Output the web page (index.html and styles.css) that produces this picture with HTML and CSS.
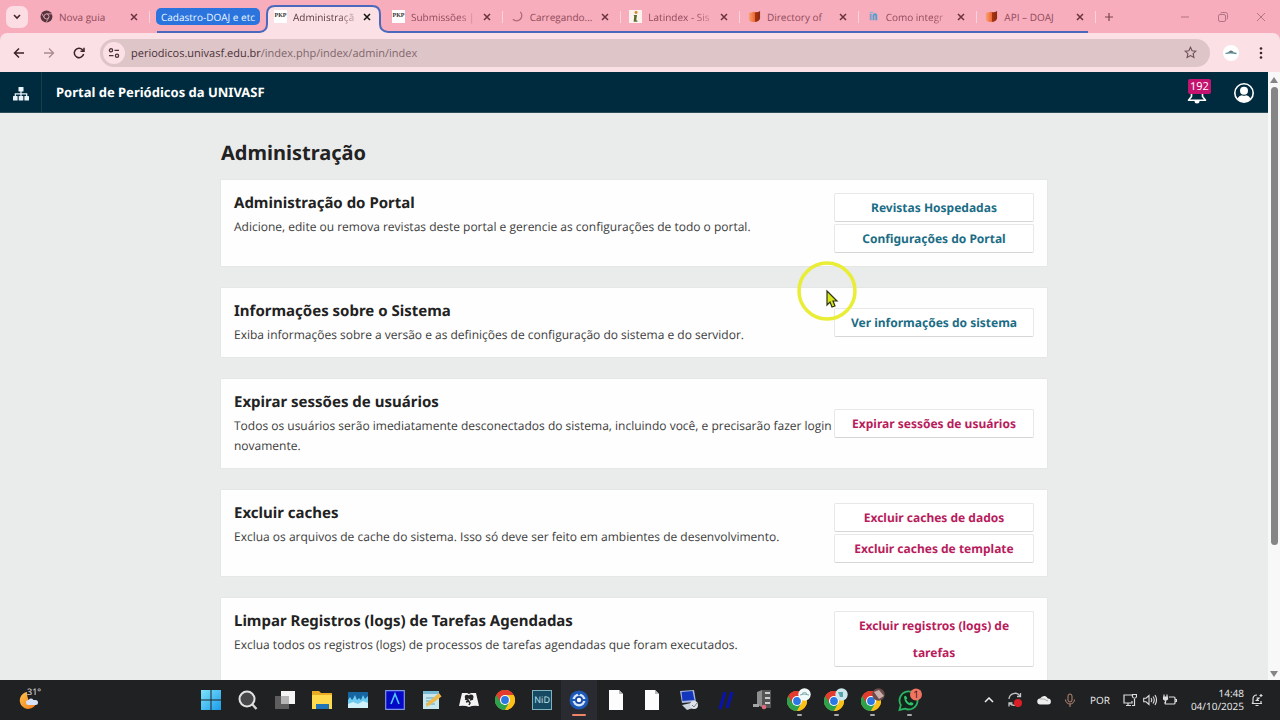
FILE: index.html
```html
<!DOCTYPE html>
<html lang="pt-BR">
<head>
<meta charset="utf-8">
<title>Administração</title>
<link rel="stylesheet" href="styles.css">
</head>
<body>
<svg width="0" height="0" class="defs" aria-hidden="true">
  <defs>
    <linearGradient id="win" x1="0" y1="0" x2="1" y2="1"><stop offset="0" stop-color="#7fe3fb"/><stop offset="1" stop-color="#1a9bea"/></linearGradient>
    <linearGradient id="doaj" x1="0" x2="1"><stop offset="0" stop-color="#f9a070"/><stop offset=".5" stop-color="#ee6a3a"/><stop offset=".55" stop-color="#a63411"/><stop offset="1" stop-color="#8a2b0e"/></linearGradient>
    <linearGradient id="moon" x1="0" y1="0" x2="1" y2="1"><stop offset="0" stop-color="#ffc44a"/><stop offset="1" stop-color="#f07a1c"/></linearGradient>
    <symbol id="close" viewBox="0 0 8 8"><path d="M1 1l6 6M7 1l-6 6" stroke="currentColor" stroke-width="1.5" fill="none"/></symbol>
    <symbol id="doaj-logo" viewBox="0 0 14 14"><path d="M1 3q3 0 5-1 4 1 7-1v8q-1 4-6 4-4 0-6-2z" fill="url(#doaj)"/></symbol>
    <symbol id="chrome" viewBox="0 0 20 20">
      <circle cx="10" cy="10" r="10" fill="#fbc116"/>
      <path d="M10 10L1.3 5A10 10 0 0 0 10 20l4.3-7.5z" fill="#2da24c"/>
      <path d="M10 5h8.7A10 10 0 0 1 10 20l4.3-7.5z" fill="#fbc116"/>
      <path d="M1.3 5L5.7 12.5L10 10V5h8.7A10 10 0 0 0 1.3 5z" fill="#e33b2e"/>
      <circle cx="10" cy="10" r="5" fill="#fff"/><circle cx="10" cy="10" r="3.9" fill="#2b78e4"/>
    </symbol>
    <symbol id="page" viewBox="0 0 20 20"><path d="M3 0h10l4 4v16H3z" fill="#fdfdfd"/><path d="M13 0v4h4z" fill="#b9b9b9"/></symbol>
  </defs>
</svg>

<header class="browser">
  <div class="tabstrip">
    <button class="tab-search" aria-label="Pesquisar guias"><svg width="8" height="6" viewBox="0 0 8 6"><path d="M1 1l3 3 3-3" stroke="#45242c" stroke-width="1.6" fill="none"/></svg></button>
    <nav class="tabs">
      <div class="tab first">
        <svg class="favicon" viewBox="0 0 14 14"><circle cx="7" cy="7" r="6.4" fill="#55353d"/><path d="M7 4.2h6M4.6 8.4L1.8 3.6M9.4 8.4l-2.8 5" stroke="#d99aa7" stroke-width="1"/><circle cx="7" cy="7" r="2.7" fill="#55353d" stroke="#e9aab7" stroke-width="1"/></svg>
        <span class="tab-title">Nova guia</span>
        <button class="tab-close" aria-label="Fechar"><svg><use href="#close"/></svg></button>
      </div>
      <div class="group"><button class="chip">Cadastro-DOAJ e etc</button></div>
      <div class="tab active">
        <svg class="outline" viewBox="0 0 128 28" preserveAspectRatio="none"><path d="M0 27Q7 26 7 19V9Q7 1 15 1H112Q120 1 120 9V19Q120 26 128 27V28H0z" fill="#fbe0e5"/><path d="M0 27Q7 26 7 19V9Q7 1 15 1H112Q120 1 120 9V19Q120 26 128 27" fill="none" stroke="#4a69bd" stroke-width="2"/></svg>
        <span class="favicon pkp">PKP</span>
        <span class="tab-title fade">Administraçã</span>
        <button class="tab-close" aria-label="Fechar"><svg><use href="#close"/></svg></button>
      </div>
      <div class="grouped">
        <div class="tab"><span class="favicon pkp">PKP</span><span class="tab-title fade">Submissões |</span><button class="tab-close" aria-label="Fechar"><svg><use href="#close"/></svg></button></div>
        <div class="tab"><svg class="favicon" viewBox="0 0 14 14"><path d="M10 2A5.6 5.6 0 1 1 2 10" fill="none" stroke="#b06a7c" stroke-width="1.4"/></svg><span class="tab-title">Carregando...</span><button class="tab-close" aria-label="Fechar"><svg><use href="#close"/></svg></button></div>
        <div class="tab"><svg class="favicon" viewBox="0 0 14 14"><path fill="#fdf3ee" d="M0 0h14v14H0z"/><circle cx="7.6" cy="2.6" r="1.6" fill="#d8862c"/><path d="M5 5.4h3.6L7.8 11l1.4.6-.2 1H5l.6-5.8z" fill="#5a6b2c"/></svg><span class="tab-title fade">Latindex - Sis</span><button class="tab-close" aria-label="Fechar"><svg><use href="#close"/></svg></button></div>
        <div class="tab"><svg class="favicon"><use href="#doaj-logo"/></svg><span class="tab-title">Directory of</span><button class="tab-close" aria-label="Fechar"><svg><use href="#close"/></svg></button></div>
        <div class="tab"><svg class="favicon" viewBox="0 0 14 14"><path d="M3 4h2v7H3z" fill="#7d9dc9"/><path d="M6 11V5q3-3 5 0v6H9V6H8v5z" fill="#4f9fd0"/><path d="M3 2h4v1.4H3z" fill="#8fb0d6"/></svg><span class="tab-title fade">Como integr</span><button class="tab-close" aria-label="Fechar"><svg><use href="#close"/></svg></button></div>
        <div class="tab"><svg class="favicon"><use href="#doaj-logo"/></svg><span class="tab-title">API – DOAJ</span><button class="tab-close" aria-label="Fechar"><svg><use href="#close"/></svg></button></div>
      </div>
    </nav>
    <div class="window-controls">
      <button class="new-tab" aria-label="Nova guia"><svg width="10" height="10" viewBox="0 0 10 10"><path d="M5 1v8M1 5h8" stroke="currentColor" stroke-width="1.2"/></svg></button>
      <button aria-label="Minimizar"><svg width="10" height="10" viewBox="0 0 10 10"><path d="M1 5h8" stroke="currentColor"/></svg></button>
      <button aria-label="Restaurar"><svg width="10" height="10" viewBox="0 0 10 10" fill="none" stroke="currentColor"><rect x=".5" y="2.5" width="7" height="7" rx="1.5"/><path d="M2.5 1.2Q3 .5 4 .5h3.5q2 0 2 2V6q0 1-.8 1.5"/></svg></button>
      <button aria-label="Fechar"><svg width="10" height="10" viewBox="0 0 10 10"><path d="M1 1l8 8M9 1L1 9" stroke="currentColor"/></svg></button>
    </div>
  </div>
  <div class="toolbar">
    <button aria-label="Voltar"><svg width="12" height="12" viewBox="0 0 12 12" fill="none" stroke="#3d2228" stroke-width="1.5"><path d="M11 6H2M6 1.5L1.5 6 6 10.5"/></svg></button>
    <button aria-label="Avançar"><svg width="12" height="12" viewBox="0 0 12 12" fill="none" stroke="#a98b91" stroke-width="1.3"><path d="M1 6h9M6 1.5L10.5 6 6 10.5"/></svg></button>
    <button aria-label="Recarregar"><svg width="12" height="12" viewBox="0 0 12 12" fill="none" stroke="#3d2228" stroke-width="1.5"><path d="M10.6 7A4.7 4.7 0 1 1 9.5 2.8L10.5 4"/><path d="M11 .8V4.300H7.500"/></svg></button>
    <div class="omnibox">
      <button class="site-info" aria-label="Informações do site"><svg width="12" height="10" viewBox="0 0 12 10" fill="none" stroke="#4b3238" stroke-width="1.3"><circle cx="3" cy="2.3" r="1.6"/><path d="M6.500 2.300H11M1 7.700h4.500"/><circle cx="9" cy="7.700" r="1.6"/></svg></button>
      <span class="url" role="textbox" aria-label="Endereço"><b>periodicos.univasf.edu.br</b>/index.php/index/admin/index</span>
      <button aria-label="Favoritar"><svg width="13" height="13" viewBox="0 0 13 13"><path d="M6.500 1.200l1.600 3.500 3.800.4-2.800 2.600.8 3.800-3.400-1.900-3.400 1.900.8-3.800L1.100 5.100l3.800-.4z" fill="none" stroke="#6d4f56" stroke-width="1.1"/></svg></button>
    </div>
    <button class="avatar" aria-label="Perfil"><svg width="16" height="16" viewBox="0 0 16 16"><circle cx="8" cy="8" r="8" fill="#fff"/><path d="M2.500 8.500q5-1.500 11 0" stroke="#5a9298" stroke-width="1.3" fill="none"/><path d="M5 7.500q3-4 6 0z" fill="#66757b"/></svg></button>
    <button aria-label="Menu"><svg width="4" height="12" viewBox="0 0 4 12" fill="#3d2228"><circle cx="2" cy="1.5" r="1.3"/><circle cx="2" cy="6" r="1.3"/><circle cx="2" cy="10.5" r="1.3"/></svg></button>
  </div>
</header>

<div class="viewport">
  <div class="site">
    <header class="site-header">
      <button class="site-menu" aria-label="Revistas"><svg width="16" height="14" viewBox="0 0 16 14" fill="#e9f5fa"><rect x="5.500" y="0" width="5" height="4.500" rx=".6"/><rect x="0" y="9" width="4.600" height="4.600" rx=".6"/><rect x="5.700" y="9" width="4.600" height="4.600" rx=".6"/><rect x="11.400" y="9" width="4.600" height="4.600" rx=".6"/><path d="M2.300 9V6.800h11.400V9M8 4v5" fill="none" stroke="#e9f5fa" stroke-width="1.2"/></svg></button>
      <a class="site-name" href="#">Portal de Periódicos da UNIVASF</a>
      <button class="bell" aria-label="192 notificações"><svg width="20" height="20" viewBox="0 0 20 20" fill="none" stroke="#fff" stroke-width="1.6"><path d="M1.500 16.200h17L15.500 12.500V8a5.500 5.500 0 0 0-11 0v4.500z" stroke-linejoin="round"/><path d="M7.500 17h5a2.500 2.500 0 0 1-5 0z" fill="#fff" stroke="none"/></svg><span class="badge">192</span></button>
      <button class="user" aria-label="Usuário"><svg width="20" height="20" viewBox="0 0 20 20"><circle cx="10" cy="10" r="9.2" fill="none" stroke="#fff" stroke-width="1.6"/><circle cx="10" cy="7.8" r="4" fill="#fff"/><path d="M3.300 15.500q2.300-3.200 4.700-3.200 2 1 4 0 2.400 0 4.700 3.200-2.700 3.500-6.700 3.500t-6.700-3.500z" fill="#fff"/></svg></button>
    </header>
    <main class="content">
      <h1>Administração</h1>
      <section class="card">
        <div class="info"><h2>Administração do Portal</h2><p>Adicione, edite ou remova revistas deste portal e gerencie as configurações de todo o portal.</p></div>
        <div class="actions"><a class="btn" href="#">Revistas Hospedadas</a><a class="btn" href="#">Configurações do Portal</a></div>
      </section>
      <section class="card">
        <div class="info"><h2>Informações sobre o Sistema</h2><p>Exiba informações sobre a versão e as definições de configuração do sistema e do servidor.</p></div>
        <div class="actions"><a class="btn" href="#">Ver informações do sistema</a></div>
      </section>
      <section class="card">
        <div class="info"><h2>Expirar sessões de usuários</h2><p>Todos os usuários serão imediatamente desconectados do sistema, incluindo você, e precisarão fazer login novamente.</p></div>
        <div class="actions"><button class="btn warn">Expirar sessões de usuários</button></div>
      </section>
      <section class="card">
        <div class="info"><h2>Excluir caches</h2><p>Exclua os arquivos de cache do sistema. Isso só deve ser feito em ambientes de desenvolvimento.</p></div>
        <div class="actions"><button class="btn warn">Excluir caches de dados</button><button class="btn warn">Excluir caches de template</button></div>
      </section>
      <section class="card">
        <div class="info"><h2>Limpar Registros (logs) de Tarefas Agendadas</h2><p>Exclua todos os registros (logs) de processos de tarefas agendadas que foram executados.</p></div>
        <div class="actions"><button class="btn warn">Excluir registros (logs) de tarefas</button></div>
      </section>
    </main>
  </div>
  <div class="scrollbar">
    <svg width="8" height="6" viewBox="0 0 8 6"><path d="M4 0l4 6H0z" fill="#858585"/></svg>
    <div class="track"><div class="thumb"></div></div>
    <svg width="8" height="6" viewBox="0 0 8 6"><path d="M4 6l4-6H0z" fill="#858585"/></svg>
  </div>
</div>

<footer class="taskbar">
  <div class="weather"><svg width="20" height="20" viewBox="0 0 20 20"><path d="M8 2a8.500 8.500 0 1 0 9 12Q8 14 8 2z" fill="url(#moon)"/><rect x="7" y="10" width="12" height="5" rx="2.500" fill="#d5e2fa"/><circle cx="12" cy="11" r="2.500" fill="#d5e2fa"/></svg><span>31°</span></div>
  <div class="apps">
    <button aria-label="Iniciar"><svg viewBox="0 0 20 20" fill="url(#win)"><path d="M0 0h9.500v9.500H0zM10.500 0H20v9.500h-9.500zM0 10.500h9.500V20H0zM10.500 10.500H20V20h-9.500z"/></svg></button>
    <button aria-label="Pesquisar"><svg viewBox="0 0 20 20"><path d="M14 14l4.500 5" stroke="#d5d5d5" stroke-width="2.4"/><circle cx="9" cy="9" r="7.500" fill="#48484b" stroke="#e2e2e2" stroke-width="2"/></svg></button>
    <button aria-label="Visão de tarefas"><svg viewBox="0 0 20 20"><path d="M6 1h14v13H6z" fill="#f4f4f4"/><path d="M0 6h14v13H0z" fill="#5d5d5d"/><path d="M6 6h8v8H6z" fill="#b5b5b5"/></svg></button>
    <button aria-label="Explorador"><svg viewBox="0 0 20 20"><path d="M0 1h7l2 2h11v16H0z" fill="#e8ad24"/><path d="M0 5h20v14H0z" fill="#ffd94e"/><path d="M4 19v-5h13v5z" fill="#2074b9"/></svg></button>
    <button aria-label="Monitor"><svg viewBox="0 0 20 20"><path d="M0 2h20v16H0z" fill="#1765a0"/><path d="M0 10l2-3 2 3 1-1 2-4 2 5 2-2 2 2 2-5 2 4 3-3v12H0z" fill="#6dcaf0"/><path d="M0 14l5-2 5 2 5-3 5 2v5H0z" fill="#d2f2fb"/></svg></button>
    <button aria-label="Aplicativo A"><svg viewBox="0 0 20 20"><path d="M.7.7h18.600v18.600H.7z" fill="#0508c4" stroke="#7f96ea" stroke-width="1.2"/><path d="M6 14l4-10 4 10" fill="none" stroke="#50c7ff" stroke-width="1.6"/></svg></button>
    <button aria-label="Bloco de notas"><svg viewBox="0 0 20 20"><path d="M1 1h16v18H1z" fill="#c8e6ee"/><path d="M1 1h16v3H1z" fill="#76b9d5"/><path d="M4 8h9M4 11h9M4 14h9" stroke="#5da7be"/><path d="M4 17l1-4L17 3l2.500 3.500L8 15z" fill="#edb94d"/></svg></button>
    <button aria-label="Leitor"><svg viewBox="0 0 20 20"><path d="M3 3h5l2 1 2-1h5l3 13q-6-1-10 1-4-2-10-1z" fill="#f4f4f4"/><circle cx="8" cy="7" r="2.300" fill="#252525"/><circle cx="12" cy="7" r="2.500" fill="#252525"/><path d="M6 9l3 1 2 3-1 2M14 9l-3 1M7 12l3-1" stroke="#252525" stroke-width="1.5" fill="none"/></svg></button>
    <button aria-label="Chrome"><svg><use href="#chrome"/></svg></button>
    <button aria-label="NID"><span class="nid">NiD</span></button>
    <button class="current" aria-label="Gravador"><svg viewBox="0 0 20 20"><circle cx="10" cy="10" r="9.500" fill="#1d58b7"/><circle cx="10" cy="10" r="6.500" fill="#d3e7ff"/><circle cx="10" cy="10" r="4" fill="#1846a0"/><path d="M1 9h5l2 2H1zM19 9h-5l-2 2h7zM8 3l2 3 2-3z" fill="#1d58b7"/><circle cx="10" cy="10" r="2.2" fill="#fff"/></svg></button>
    <button aria-label="Documento"><svg><use href="#page"/></svg></button>
    <button aria-label="Documento"><svg><use href="#page"/></svg></button>
    <button aria-label="Computador"><svg viewBox="0 0 20 20"><path d="M1 1l14-1 2 12-14 1z" fill="#a9b8db"/><path d="M2.500 2l11-1 2 9-12 1z" fill="#1436bd"/><path d="M3 15l9-2 5 4-9 3z" fill="#cbd3df"/><circle cx="15" cy="15" r="4" fill="#e0e3e8"/><path d="M13 15l2 2 3-4" stroke="#77808e" fill="none"/></svg></button>
    <button aria-label="Aplicativo"><svg viewBox="0 0 20 20"><path d="M4 19L9 2M11 18l5-16" stroke="#0712b0" stroke-width="3"/></svg></button>
    <button aria-label="Servidor"><svg viewBox="0 0 20 20"><path d="M4 2l5-2v17l-5-2z" fill="#8e8e8e"/><path d="M9 0h9v18H9z" fill="#555"/><path d="M12 3h5M12 8h5M12 13h5" stroke="#cdcdcd" stroke-width="2"/><path d="M0 14h6v3H0z" fill="#a5a5a5"/><circle cx="11" cy="17" r="2.3" fill="#e06a7c"/></svg></button>
    <button class="running" aria-label="Chrome, perfil 1"><svg viewBox="0 0 24 24"><use href="#chrome" x="0" y="3" width="20" height="20"/><circle cx="17.500" cy="6.500" r="6.200" fill="#f3fafa"/><path d="M13 7q4-2 9 0M15 5.500q3-2 5 0" fill="none" stroke="#79a9ab"/></svg></button>
    <button class="running" aria-label="Chrome, perfil 2"><svg viewBox="0 0 24 24"><use href="#chrome" x="0" y="3" width="20" height="20"/><circle cx="17.500" cy="6.500" r="6.200" fill="#cde7ec"/><path d="M14 4h5v5h-3z" fill="#5aa3aa"/></svg></button>
    <button class="running" aria-label="Chrome, perfil 3"><svg viewBox="0 0 24 24"><use href="#chrome" x="0" y="3" width="20" height="20"/><circle cx="17.500" cy="6.500" r="6.200" fill="#6c4c4b"/><path d="M13 4l5 7 5-3-5-6z" fill="#c9adab"/></svg></button>
    <button class="running" aria-label="WhatsApp"><svg viewBox="0 0 24 24"><path d="M1.500 22l1.300-5A9 9 0 1 1 7 20.700z" fill="#15241b" stroke="#28b463" stroke-width="1.8"/><path d="M6 9q1-2 2.300-.5l.9 2-1 1q1 2.500 3.500 3.500l1-1 2.500 1q.5 2-2 2.500Q7 17 6 9z" fill="#2fc46d"/><circle cx="18" cy="6.500" r="6" fill="#ef7461"/></svg><span class="count">1</span></button>
  </div>
  <div class="tray">
    <svg width="10" height="6" viewBox="0 0 10 6"><path d="M1 5l4-4 4 4" fill="none" stroke="#eee" stroke-width="1.5"/></svg>
    <svg width="16" height="16" viewBox="0 0 16 16"><path d="M2 7a6 6 0 0 1 11-3M13.500 1v3.500H10M13 9a6 6 0 0 1-10.500 2M2 14.500V11h3.500" fill="none" stroke="#c4c4c4" stroke-width="1.3"/><circle cx="11" cy="11" r="4" fill="#dc1f26"/></svg>
    <svg width="14" height="10" viewBox="0 0 14 10"><path d="M3.500 9.500a3 3 0 0 1-.5-6Q5 .5 8 1q2 .5 2.800 2.500a3 3 0 0 1 .2 6z" fill="#eee"/><path d="M3 4q4-1 8 2" stroke="#aaa" fill="none"/></svg>
    <svg width="12" height="14" viewBox="0 0 12 14" fill="none" stroke="#b98975"><rect x="4" y="1" width="4" height="8" rx="2"/><path d="M1.500 6.500a4.500 4.500 0 0 0 9 0M6 11v3"/></svg>
    <span class="lang">POR</span>
    <div class="status">
      <svg width="14" height="14" viewBox="0 0 14 14" fill="none" stroke="#ddd" stroke-width="1.2"><path d="M9 2H1v8h8V8M3 12.500h5M5 10v2.500M11.500 6v6.500H9"/><path d="M9.500 1.500h4V4q-2 2.500-4 0z"/></svg>
      <svg width="14" height="12" viewBox="0 0 14 12" fill="none" stroke="#ddd" stroke-width="1.1"><path d="M.7 4.200H3L6 1.500v9L3 7.800H.7zM8 4q1.500 2 0 4M10 2.500q2.500 3.500 0 7M12 1q3 5 0 10"/></svg>
      <svg width="14" height="12" viewBox="0 0 14 12" fill="none" stroke="#ddd" stroke-width="1.2"><path d="M6 3h5q1 0 1 1v5q0 1-1 1H3q-1 0-1-1V8M12.500 5.500h1v2h-1"/><path d="M1 .5v2M4 .5v2M.5 3h4v2q-2 2-4 0zM2.500 6v3" fill="#ddd"/></svg>
    </div>
    <div class="notify">
      <div class="clock"><time>14:48</time><time>04/10/2025</time></div>
      <svg width="12" height="14" viewBox="0 0 12 14" fill="none" stroke="#ddd" stroke-width="1.2"><path d="M6 2Q2 2 2 6v4H.8M.8 10.500H11M10 8v2.500M4.500 12.500h3M5.500 5h2.500L5.500 7.500H8M10 1v3M8.500 2.500h3"/></svg>
    </div>
  </div>
</footer>

<svg class="pointer" width="62" height="62" viewBox="0 0 62 62" aria-hidden="true"><circle cx="31" cy="31" r="28" fill="none" stroke="#e9ed35" stroke-width="3.5"/><path d="M31 31v14l3-3 2 5 3-1-2-5h4z" fill="#d7e51c" stroke="#2f3412" stroke-width="1.2"/></svg>
</body>
</html>
```

FILE: styles.css
```css
* { box-sizing: border-box; }
body {
  margin: 0;
  height: 100vh;
  display: flex;
  flex-direction: column;
  overflow: hidden;
  font-family: "Noto Sans", sans-serif;
  font-size: 12px;
  color: #222;
  text-rendering: geometricPrecision;
}
button { border: 0; padding: 0; background: none; font: inherit; color: inherit; text-rendering: inherit; }
a { color: inherit; text-decoration: none; }
svg { display: block; flex: none; }
.defs { position: absolute; }

/* Browser frame */
.browser { font-family: "Open Sans", "Noto Sans", sans-serif; background: #f8adbc; }
.tabstrip { display: flex; height: 33px; }
.tab-search {
  display: flex; align-items: center; justify-content: center;
  width: 22px; height: 22px; margin: 6px 4px 0 6px;
  border-radius: 7px; background: #fbdde3;
}
.tabs { flex: 1; display: flex; min-width: 0; }
.tab {
  position: relative;
  display: flex; align-items: center; gap: 6px;
  padding: 0 12px 0 8px;
  min-width: 0;
  color: #8f4b5b;
  font-size: 10px;
}
.tab::after { content: ""; position: absolute; right: 0; top: 11px; width: 1px; height: 12px; background: #fbd3da; }
.tab.first { width: 118px; }
.favicon { width: 13px; height: 13px; flex: none; position: relative; }
.pkp { background: #fff; color: #333; font: bold 6px/13px "Liberation Serif", serif; text-align: center; }
.tab-title { flex: 1; white-space: nowrap; position: relative; }
.fade { mask-image: linear-gradient(90deg, #000 70%, #0003); }
.tab-close { color: #6b3240; position: relative; }
.tab-close svg { width: 8px; height: 8px; }
.group { width: 110px; padding: 8px 0 0 6px; background: linear-gradient(#4a69bd, #4a69bd) 7px 31px / 103px 2px no-repeat; }
.chip {
  display: block; height: 17px; padding: 0 5px; border-radius: 5px;
  background: #2b74de; color: #eaf4ff; font-size: 10px; line-height: 16px; white-space: nowrap;
}
.tab.active { width: 124px; padding: 0 13px 0 14px; color: #5a3a42; }
.tab.active::after { display: none; }
.tab.active .tab-close { color: #111; }
.outline { position: absolute; left: 0; top: 5px; width: 128px; height: 28px; }
.grouped {
  flex: 1; display: grid; grid-template-columns: repeat(6, minmax(0, 1fr));
  background: linear-gradient(#4a69bd, #4a69bd) 4px 31px / calc(100% - 12px) 2px no-repeat;
}
.window-controls { display: flex; align-items: center; justify-content: flex-end; width: 184px; color: #b27584; }
.window-controls button { width: 38px; display: flex; justify-content: center; }
.window-controls .new-tab { width: 26px; margin-right: auto; color: #7d4453; }
.toolbar {
  display: flex; align-items: center; height: 39px; padding: 0 4px;
  background: #fbe0e5; border-radius: 7px 7px 0 0;
}
.toolbar > button { width: 30px; display: flex; justify-content: center; }
.omnibox {
  flex: 1; display: flex; align-items: center; height: 28px; margin: 0 6px;
  padding: 0 13px 0 3px; border-radius: 14px; background: #dec5c8;
}
.site-info { display: flex; align-items: center; justify-content: center; width: 22px; height: 22px; border-radius: 11px; background: #fbe0e5; }
.url { flex: 1; padding: 1px 0 0 6px; font-size: 11px; color: #80666c; }
.url b { font-weight: 400; color: #4b3238; }

/* Portal */
.viewport { flex: 1; min-height: 0; display: flex; }
.site { flex: 1; overflow: hidden; background: #eaebeb; }
.site-header { display: flex; align-items: center; height: 41px; padding-right: 14px; background: #002b3e; border-bottom: 1px solid #2b4c59; color: #fff; }
.site-menu { display: flex; align-items: center; justify-content: center; width: 42px; height: 40px; padding-top: 4px; border-right: 1px solid #17404f; }
.site-name { flex: 1; padding-left: 14px; font-size: 13px; font-weight: 700; }
.bell { position: relative; margin-right: 27px; padding-top: 4px; }
.badge { position: absolute; top: -1px; left: 1px; padding: 0 2px; border-radius: 2px; background: #c3136e; font-size: 11px; line-height: 15px; }
.user { padding-top: 2px; }
.content { width: 826px; max-width: 100%; margin: 0 auto; }
h1 { margin: 0; padding: 26px 0 13px; font-size: 20px; line-height: 28px; }
.card {
  display: flex; align-items: center;
  margin-bottom: 22px; padding: 13px 13px 12px;
  background: #fefefe; box-shadow: 0 0 1px #ccc;
}
.info { flex: 1; align-self: flex-start; }
h2 { margin: 0 0 4px; font-size: 15px; line-height: 20px; }
p { margin: 0; font-family: "Open Sans", "Noto Sans", sans-serif; line-height: 20px; color: #3c3c3c; }
.actions { flex: none; width: 200px; padding-bottom: 1px; display: flex; flex-direction: column; gap: 2px; }
.btn {
  padding: 0 12px; border: 1px solid #e8e8e8; border-bottom-color: #d6d6d6; border-radius: 2px;
  background: #fff; color: #1b6d85; font-weight: 700; line-height: 27px; text-align: center;
}
.warn { color: #b81c5c; }
.scrollbar { width: 12px; display: flex; flex-direction: column; align-items: center; gap: 4px; padding: 5px 0 3px; background: #f8f8f8; }
.track { flex: 1; width: 7px; }
.thumb { height: 79%; border-radius: 4px; background: #858585; }

/* Taskbar */
.taskbar { display: flex; align-items: center; height: 40px; background: #202123; color: #eee; font-family: "Open Sans", "Noto Sans", sans-serif; }
.weather { display: flex; width: 193px; padding-left: 19px; }
.weather span { margin: -3px 0 0 -12px; z-index: 1; font-size: 9px; line-height: 10px; }
.apps { width: 735px; display: grid; grid-template-columns: repeat(20, 1fr); }
.apps button { position: relative; display: flex; align-items: center; justify-content: center; height: 40px; }
.apps svg { width: 20px; height: 20px; }
.apps .running svg { width: 24px; height: 24px; }
.running::after, .current::after { content: ""; position: absolute; bottom: 4px; width: 5px; height: 2px; border-radius: 1px; background: #aaa; }
.current { background: #292b30; }
.current::after { width: 14px; background: #ef8468; }
.nid { width: 20px; height: 20px; border: 1px solid #7eb2c2; background: #164a63; color: #c3e6ee; font-size: 9px; line-height: 18px; }
.count { position: absolute; top: 7px; right: 9px; font-size: 10px; line-height: 14px; color: #3a1410; }
.tray { flex: 1; display: flex; align-items: center; justify-content: space-between; padding: 0 17px 0 56px; }
.lang { font-size: 10px; }
.status { display: flex; align-items: center; gap: 6px; }
.notify { display: flex; align-items: center; gap: 7px; }
.clock { display: flex; flex-direction: column; text-align: right; font-size: 10px; line-height: 13px; }

.pointer { position: absolute; left: 796px; top: 260px; }
```
